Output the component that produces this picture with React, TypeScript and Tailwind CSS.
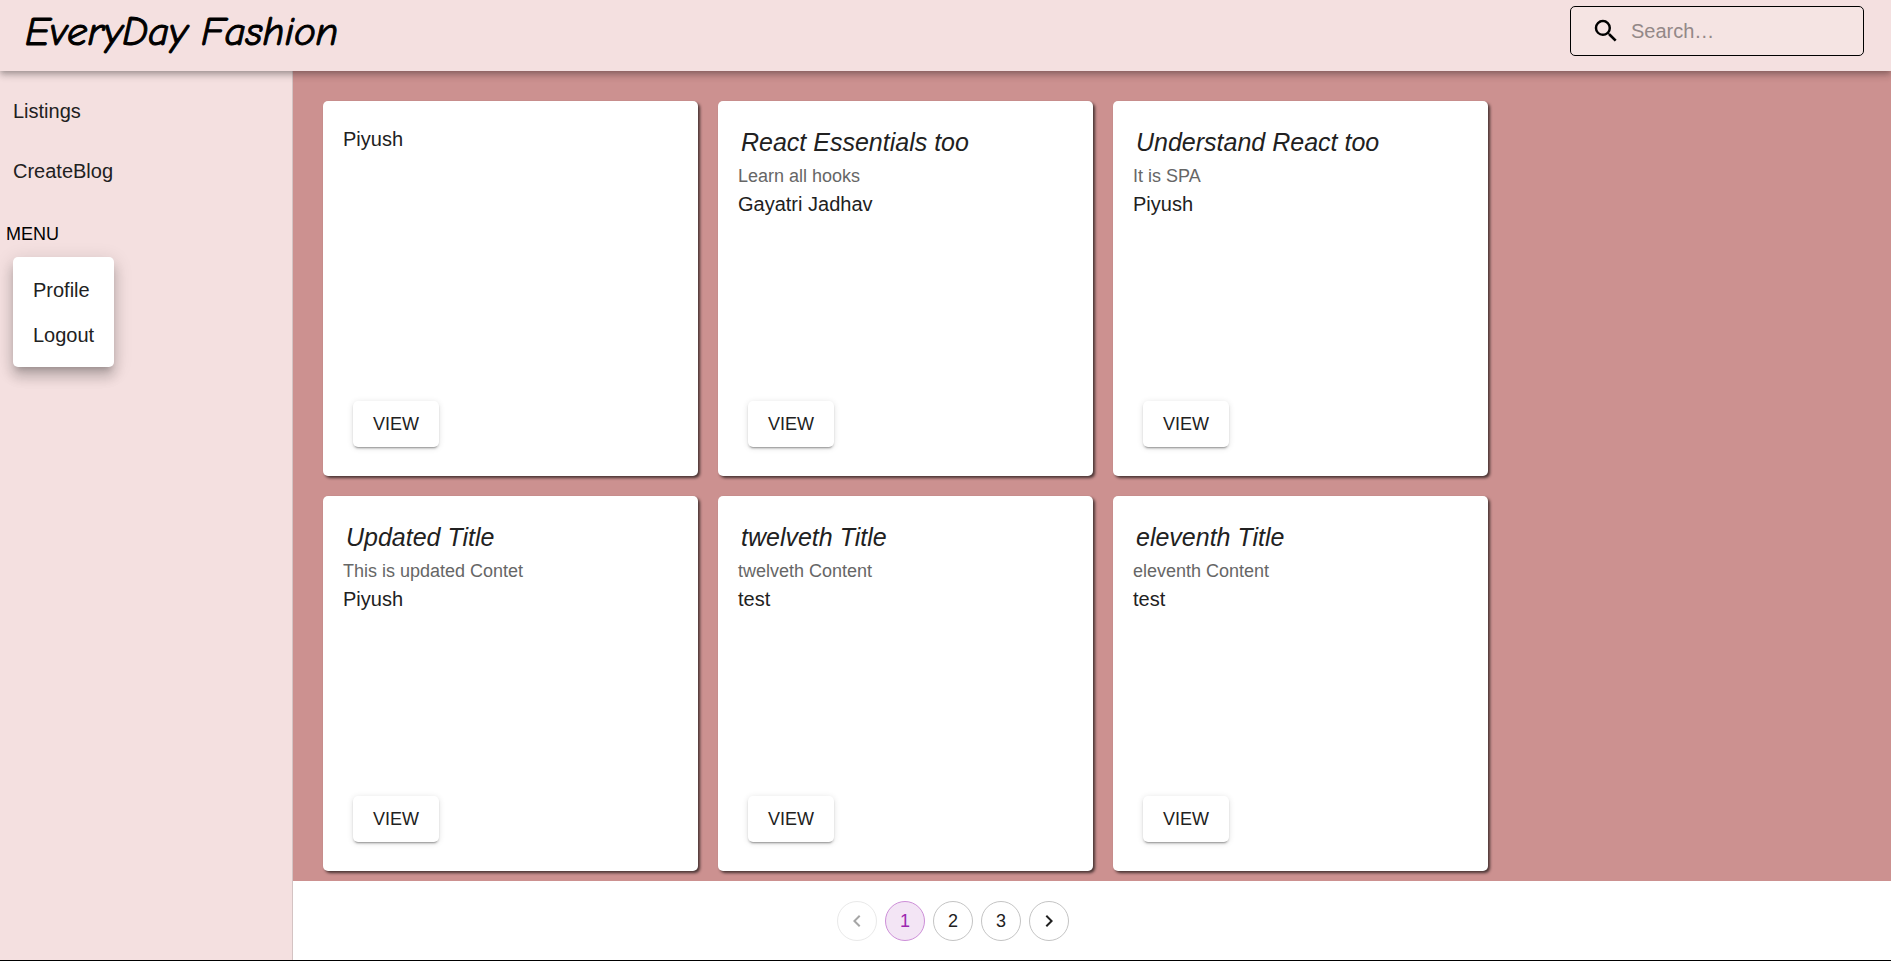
import { MdNavigateBefore, MdNavigateNext, MdSearch } from "react-icons/md";

type Post = { title?: string; content?: string; author: string };

const posts: Post[] = [
  { author: "Piyush" },
  { title: "React Essentials too", content: "Learn all hooks", author: "Gayatri Jadhav" },
  { title: "Understand React too", content: "It is SPA", author: "Piyush" },
  { title: "Updated Title", content: "This is updated Contet", author: "Piyush" },
  { title: "twelveth Title", content: "twelveth Content", author: "test" },
  { title: "eleventh Title", content: "eleventh Content", author: "test" },
];

function Header() {
  return (
    <header className="relative z-10 flex h-[71px] shrink-0 items-start justify-between bg-[#f4e0e0] pr-[27px] pl-[25px] shadow-[0_2px_5px_-1px_rgba(0,0,0,0.2),0_5px_6px_0_rgba(0,0,0,0.14),0_1px_12px_0_rgba(0,0,0,0.12)]">
      <h1 className="pt-1 font-['Comic_Sans_MS','Comic_Neue','Open_Sans',sans-serif] text-[41px] leading-14 font-normal text-black italic [-webkit-text-stroke:1px_black]">
        EveryDay Fashion
      </h1>
      <label className="mt-[6px] flex h-[50px] w-[294px] items-center gap-[10px] rounded-[5px] border border-black bg-[#f5e4e3] pl-5 text-black">
        <MdSearch className="size-[30px] shrink-0" aria-hidden="true" />
        <input
          type="search"
          aria-label="Search"
          placeholder="Search…"
          className="min-w-0 flex-1 bg-transparent text-xl outline-none placeholder:text-[#938888]"
        />
      </label>
    </header>
  );
}

function Sidebar() {
  return (
    <aside className="flex w-[293px] shrink-0 flex-col items-start border-r border-[#d4c3c3] bg-[#f4e0e0] pt-[10px]">
      <nav className="flex flex-col pl-[13px]">
        <a href="#listings" className="flex h-[60px] items-center">Listings</a>
        <a href="#create" className="flex h-[60px] items-center">CreateBlog</a>
      </nav>
      <button type="button" className="mt-[10px] flex h-[46px] items-center px-[6px] text-lg text-black">
        MENU
      </button>
      <ul className="ml-[13px] rounded-[5px] bg-white py-[10px] shadow-[0_6px_6px_-4px_rgba(0,0,0,0.2),0_10px_12px_1px_rgba(0,0,0,0.14),0_4px_18px_2px_rgba(0,0,0,0.12)]">
        <li><button type="button" className="flex h-[45px] items-center px-5">Profile</button></li>
        <li><button type="button" className="flex h-[45px] items-center px-5">Logout</button></li>
      </ul>
    </aside>
  );
}

function PostCard({ title, content, author }: Post) {
  return (
    <article className="flex h-[375px] w-[375px] flex-col items-start rounded-[5px] bg-white px-5 pt-[23px] pb-[29px] shadow-[2px_2px_3px_rgba(0,0,0,0.65)]">
      {title && <h2 className="pb-[3px] pl-[3px] text-[25px] leading-9 italic">{title}</h2>}
      {content && <p className="text-lg leading-[26px] text-[#666666]">{content}</p>}
      <p className="leading-[30px]">{author}</p>
      <button
        type="button"
        className="mt-auto ml-[10px] h-[46px] rounded-[5px] bg-white px-5 text-lg shadow-[0_3px_1px_-2px_rgba(0,0,0,0.2),0_2px_2px_0_rgba(0,0,0,0.14),0_1px_6px_0_rgba(0,0,0,0.12)]"
      >
        VIEW
      </button>
    </article>
  );
}

function Pagination() {
  const round = "flex size-10 items-center justify-center rounded-full border";
  return (
    <nav aria-label="Pages" className="flex max-w-[1320px] items-center justify-center gap-2 pt-5 pb-4 text-lg">
      <button type="button" disabled aria-label="Previous page" className={`${round} border-[#e9e9e9] text-[#a6a6a6]`}>
        <MdNavigateBefore className="size-6" />
      </button>
      <button type="button" aria-current="page" className={`${round} border-[#cd8fd8] bg-[#f3e5f5] text-[#9c27b0]`}>1</button>
      <button type="button" className={`${round} border-[#c4c4c4]`}>2</button>
      <button type="button" className={`${round} border-[#c4c4c4]`}>3</button>
      <button type="button" aria-label="Next page" className={`${round} border-[#c4c4c4]`}>
        <MdNavigateNext className="size-6" />
      </button>
    </nav>
  );
}

export default function App() {
  return (
    <div className="flex min-h-screen flex-col border-b border-black bg-white font-['Liberation_Sans',Arial,sans-serif] text-xl text-[#212121]">
      <Header />
      <div className="flex flex-1">
        <Sidebar />
        <main className="min-w-0 flex-1">
          <section className="flex flex-wrap gap-5 bg-[#cc9190] pt-[30px] pr-[300px] pb-[10px] pl-[30px]">
            {posts.map((post, i) => (
              <PostCard key={i} {...post} />
            ))}
          </section>
          <Pagination />
        </main>
      </div>
    </div>
  );
}
